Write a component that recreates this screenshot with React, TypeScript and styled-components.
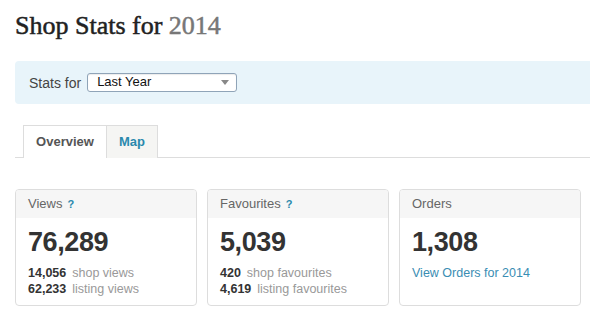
import styled, { createGlobalStyle } from 'styled-components';

const GlobalStyle = createGlobalStyle`
  body {
    margin: 0;
    background: #fff;
    font-family: "Liberation Sans", Arial, sans-serif;
    overflow: hidden;
  }
`

const stats = [
  {
    title: 'Views',
    help: true,
    total: '76,289',
    lines: [
      { n: '14,056', label: 'shop views' },
      { n: '62,233', label: 'listing views' },
    ],
  },
  {
    title: 'Favourites',
    help: true,
    total: '5,039',
    lines: [
      { n: '420', label: 'shop favourites' },
      { n: '4,619', label: 'listing favourites' },
    ],
  },
  {
    title: 'Orders',
    help: false,
    total: '1,308',
    link: 'View Orders for 2014',
  },
];

const App = () => {
  return (
    <>
      <GlobalStyle />
      <Page>
        <Title>
          Shop Stats for <Year>2014</Year>
        </Title>
        <FilterBar>
          <FilterLabel>Stats for</FilterLabel>
          <Select>
            <span>Last Year</span>
            <Caret />
          </Select>
        </FilterBar>
        <Tabs>
          <Tab active>Overview</Tab>
          <Tab>Map</Tab>
        </Tabs>
        <Cards>
          {stats.map((s) => (
            <Card key={s.title}>
              <CardHead>
                {s.title}
                {s.help && <Help>?</Help>}
              </CardHead>
              <CardBody>
                <Total>{s.total}</Total>
                {s.lines &&
                  s.lines.map((l) => (
                    <Line key={l.label}>
                      <b>{l.n}</b>
                      <LineLabel>{l.label}</LineLabel>
                    </Line>
                  ))}
                {s.link && <OrdersLink href="#">{s.link}</OrdersLink>}
              </CardBody>
            </Card>
          ))}
        </Cards>
      </Page>
    </>
  );
}

const Page = styled.div`
  padding: 0 0 0 15px;
  width: 575px;
  overflow: hidden;
`

const Title = styled.h1`
  margin: 0;
  padding-top: 10px;
  font-family: "Liberation Serif", "DejaVu Serif", serif;
  font-weight: normal;
  font-size: 26px;
  line-height: 32px;
  color: #222;
  -webkit-text-stroke: 0.5px #222;
`

const Year = styled.span`
  color: #777;
  -webkit-text-stroke: 0.5px #777;
`

const FilterBar = styled.div`
  display: flex;
  align-items: center;
  margin-top: 19px;
  height: 43px;
  padding-left: 14px;
  background: #e8f4fa;
  border-radius: 4px 0 0 4px;
`

const FilterLabel = styled.span`
  font-size: 14px;
  color: #444;
  margin-right: 6px;
`

const Select = styled.div`
  position: relative;
  box-sizing: border-box;
  width: 150px;
  height: 19px;
  margin-top: -1px;
  padding-left: 9px;
  border: 1px solid #8fa4b8;
  border-radius: 3px;
  background: #fff;
  box-shadow: inset 0 1px 1px rgba(0, 0, 0, 0.08);
  font-size: 13px;
  line-height: 16px;
  color: #111;
`

const Caret = styled.span`
  position: absolute;
  right: 7px;
  top: 6px;
  border-left: 4px solid transparent;
  border-right: 4px solid transparent;
  border-top: 5px solid #888;
`

const Tabs = styled.div`
  display: flex;
  margin-top: 21px;
  padding-left: 8px;
  border-bottom: 1px solid #ddd;
  height: 32px;
`

const Tab = styled.div<{ active?: boolean }>`
  box-sizing: border-box;
  height: 33px;
  width: ${(p) => (p.active ? '84px' : '52px')};
  text-align: center;
  font-size: 13px;
  font-weight: bold;
  line-height: 31px;
  border: 1px solid #ddd;
  border-bottom: none;
  background: ${(p) => (p.active ? '#fff' : '#f5f5f3')};
  color: ${(p) => (p.active ? '#555' : '#2a89ad')};
  margin-left: ${(p) => (p.active ? '0' : '-1px')};
`

const Cards = styled.div`
  display: grid;
  grid-template-columns: repeat(3, 182px);
  column-gap: 10px;
  margin-top: 31px;
`

const Card = styled.div`
  box-sizing: border-box;
  height: 117px;
  border: 1px solid #ddd;
  border-radius: 4px;
  overflow: hidden;
`

const CardHead = styled.div`
  height: 28px;
  padding-left: 12px;
  background: #f6f6f6;
  font-size: 13px;
  line-height: 27px;
  color: #666;
`

const Help = styled.span`
  margin-left: 5px;
  font-size: 11px;
  font-weight: bold;
  color: #2a89ad;
`

const CardBody = styled.div`
  padding: 8px 12px 0;
`

const Total = styled.div`
  font-size: 27px;
  line-height: 32px;
  font-weight: bold;
  letter-spacing: -0.4px;
  color: #333;
  margin-bottom: 7px;
`

const Line = styled.div`
  font-size: 12.5px;
  line-height: 16px;
  color: #333;
`

const LineLabel = styled.span`
  margin-left: 6px;
  color: #999;
`

const OrdersLink = styled.a`
  display: block;
  font-size: 12.5px;
  line-height: 16px;
  color: #3a8db3;
  text-decoration: none;
`

export default App;
